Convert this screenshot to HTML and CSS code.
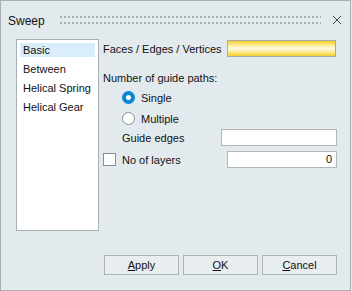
FILE: index.html
```html
<!DOCTYPE html>
<html lang="en">
<head>
    <meta charset="UTF-8">
    <title>Sweep</title>
    <link rel="stylesheet" href="styles.css">
</head>
<body>
    <div class="dialog">
        <div class="titlebar">
            <span class="title">Sweep</span>
            <div class="grip">
                <div class="grip-row"></div>
                <div class="grip-row"></div>
            </div>
            <svg class="close" width="10" height="10" viewBox="0 0 10 10">
                <path d="M1 1 L9 9 M9 1 L1 9" stroke="#444" stroke-width="1" fill="none"/>
            </svg>
        </div>
        <div class="main">
            <ul class="list">
                <li class="current">Basic</li>
                <li>Between</li>
                <li>Helical Spring</li>
                <li>Helical Gear</li>
            </ul>
            <div class="panel">
                <div class="row row-faces">
                    <span>Faces / Edges / Vertices</span>
                    <div class="pick"></div>
                </div>
                <div class="label-guide">Number of guide paths:</div>
                <div class="radio-row row-single">
                    <span class="radio on"></span>
                    <span>Single</span>
                </div>
                <div class="radio-row row-multi">
                    <span class="radio"></span>
                    <span>Multiple</span>
                </div>
                <div class="row row-edges">
                    <span class="indent">Guide edges</span>
                    <div class="field wide"></div>
                </div>
                <div class="row row-layers">
                    <span class="check"></span>
                    <span class="check-label">No of layers</span>
                    <div class="field num">0</div>
                </div>
            </div>
        </div>
        <div class="buttons">
            <div class="btn"><u>A</u>pply</div>
            <div class="btn"><u>O</u>K</div>
            <div class="btn"><u>C</u>ancel</div>
        </div>
    </div>
</body>
</html>
```

FILE: styles.css
```css
* {
    padding: 0;
    margin: 0;
    box-sizing: border-box;
}
body {
    font-family: "Liberation Sans", Arial, sans-serif;
    font-size: 11px;
    color: #111;
    background: #e3eaee;
}
.dialog {
    width: 351px;
    height: 291px;
    border: 1px solid #a9b0b5;
    background: #e3eaee;
    display: flex;
    flex-direction: column;
}
.titlebar {
    height: 37px;
    display: flex;
    align-items: center;
    padding: 2px 0 0 7px;
}
.title {
    font-size: 12px;
    width: 52px;
}
.grip {
    width: 261px;
    display: flex;
    flex-direction: column;
    gap: 4px;
    margin-top: -1px;
}
.grip-row {
    height: 2px;
    background: repeating-linear-gradient(90deg, #a9afb4 0 2px, transparent 2px 4px);
}
.close {
    margin-left: 11px;
    margin-top: -1px;
}
.main {
    display: flex;
    padding: 1px 13px 0 15px;
}
.list {
    list-style: none;
    width: 83px;
    height: 192px;
    background: #fff;
    border: 1px solid #a9b0b5;
    padding: 3px 3px 0 3px;
}
.list li {
    height: 19px;
    line-height: 13px;
    padding: 1px 0 0 3px;
}
.list li.current {
    background: #d9eefa;
    height: 14px;
    margin-bottom: 5px;
}
.panel {
    flex: 1;
    padding-left: 4px;
}
.row {
    display: flex;
    align-items: center;
    height: 17px;
}
.row-faces {
    margin-top: 1px;
}
.pick {
    margin-left: auto;
    margin-right: 1px;
    width: 109px;
    height: 17px;
    border: 1px solid #a8aaa8;
    background: linear-gradient(180deg, #f4cf2c 0%, #fde98a 25%, #fffbe2 50%, #fde98a 75%, #f4cf2c 100%);
}
.label-guide {
    margin-top: 14px;
    height: 15px;
    line-height: 15px;
}
.radio-row {
    display: flex;
    align-items: center;
    height: 15px;
    padding-left: 19px;
}
.row-single {
    margin-top: 4px;
}
.row-multi {
    margin-top: 6px;
}
.radio {
    width: 13px;
    height: 13px;
    border-radius: 50%;
    border: 1px solid #8a8f93;
    background: #fff;
    margin-right: 6px;
}
.radio.on {
    border: 4px solid #0a86d8;
    background: #fff;
}
.row-edges {
    margin-top: 3px;
}
.indent {
    padding-left: 19px;
}
.field {
    margin-left: auto;
    height: 17px;
    background: #fff;
    border: 1px solid #b1b7bc;
}
.field.wide {
    width: 116px;
}
.row-layers {
    margin-top: 5px;
}
.check {
    width: 13px;
    height: 13px;
    border: 1px solid #8a8f93;
    background: #fff;
}
.check-label {
    margin-left: 6px;
}
.field.num {
    width: 110px;
    text-align: right;
    padding-right: 4px;
    line-height: 15px;
}
.buttons {
    margin-top: auto;
    display: flex;
    justify-content: flex-end;
    gap: 4px;
    padding: 0 13px 15px 0;
}
.btn {
    width: 75px;
    height: 20px;
    border: 1px solid #adb3b8;
    background: #e8edf0;
    text-align: center;
    line-height: 18px;
}
```
